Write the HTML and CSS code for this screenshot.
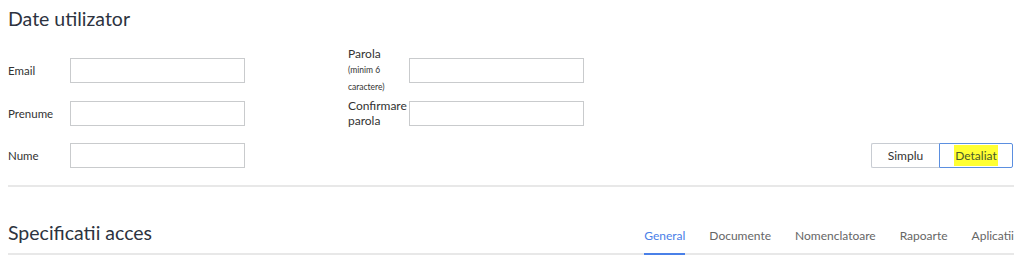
FILE: index.html
```html
<!DOCTYPE html>
<html lang="ro">
<head>
<meta charset="UTF-8">
<title>Date utilizator</title>
<link rel="stylesheet" href="styles.css">
</head>
<body>
<div class="page">
    <h2 class="title">Date utilizator</h2>
    <div class="form">
        <label class="lbl left r1">Email</label>
        <input class="inp left-in r1" type="text">
        <label class="lbl lbl2 right r1">Parola<br><small>(minim 6<br>caractere)</small></label>
        <input class="inp right-in r1" type="password">

        <label class="lbl left r2">Prenume</label>
        <input class="inp left-in r2" type="text">
        <label class="lbl lbl2 right r2">Confirmare parola</label>
        <input class="inp right-in r2" type="password">

        <label class="lbl left r3">Nume</label>
        <input class="inp left-in r3" type="text">
        <div class="switch r3">
            <button class="sw">Simplu</button>
            <button class="sw active"><span class="mark">Detaliat</span></button>
        </div>
    </div>
    <hr class="sep">
    <div class="tabbar">
        <h2 class="title sub">Specificatii acces</h2>
        <ul class="tabs">
            <li class="on">General</li>
            <li>Documente</li>
            <li>Nomenclatoare</li>
            <li>Rapoarte</li>
            <li>Aplicatii</li>
        </ul>
    </div>
</div>
</body>
</html>
```
FILE: styles.css
```css
body {
margin: 0;
background: #fff;
font-family: Lato, "Open Sans", sans-serif;
color: #333;
}
.page {
padding: 0 10px 0 8px;
}
.title {
margin: 0;
padding-top: 6px;
font-size: 19.5px;
font-weight: 400;
color: #2d3340;
line-height: 26px;
}
.form {
display: grid;
grid-template-columns: 62px 175px 103px 61px 175px 1fr;
grid-template-rows: 25px 25px 25px;
row-gap: 17.5px;
align-items: center;
margin-top: 26px;
}
.r1 { grid-row: 1; }
.r2 { grid-row: 2; }
.r3 { grid-row: 3; }
.left { grid-column: 1; }
.left-in { grid-column: 2; }
.right { grid-column: 4; }
.right-in { grid-column: 5; }
.lbl {
font-size: 11.5px;
line-height: 15px;
color: #333;
}
.lbl2 {
font-size: 12px;
}
.lbl small {
font-size: 8.5px;
line-height: 15px;
}
.inp {
width: 175px;
height: 25px;
box-sizing: border-box;
border: 1px solid #c9cbcd;
margin: 0;
padding: 0 6px;
}
.switch {
grid-column: 6;
justify-self: end;
display: flex;
margin-right: 1px;
}
.sw {
height: 25px;
box-sizing: border-box;
background: #fff;
border: 1px solid #c8ccd2;
font-family: Lato, sans-serif;
font-size: 12px;
color: #333;
padding: 0;
width: 68px;
}
.sw.active {
border-color: #5b8fe0;
width: 74px;
border-radius: 0 2px 2px 0;
}
.sw:first-child {
border-radius: 2px 0 0 2px;
border-right: none;
}
.mark {
background: #ffff33;
padding: 3px 1px;
color: #4a5a2a;
}
.sep {
border: none;
border-top: 2px solid #e8e8e8;
margin: 17px 0 0 0;
}
.tabbar {
display: flex;
align-items: flex-end;
margin-top: 33px;
border-bottom: 2px solid #e8e8e8;
}
.sub {
padding: 0 0 7px 0;
}
.tabs {
list-style: none;
margin: 0 0 -2px auto;
padding: 0;
display: flex;
gap: 24px;
}
.tabs li {
font-size: 12px;
color: #666;
padding: 0 0 10px 0;
border-bottom: 2px solid transparent;
}
.tabs li.on {
color: #4a80e8;
border-bottom-color: #4a80e8;
}
```
